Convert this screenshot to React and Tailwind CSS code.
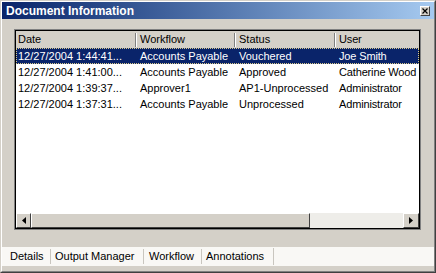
export default function App() {
  const cols = [
    { w: "w-[121px]", pl: "pl-[2px]" },
    { w: "w-[99px]", pl: "pl-[3px]" },
    { w: "w-[100px]", pl: "pl-[3px]" },
    { w: "flex-1", pl: "pl-[3px] tracking-[-0.15px]" },
  ];
  const headers = ["Date", "Workflow", "Status", "User"];
  const rows = [
    ["12/27/2004 1:44:41...", "Accounts Payable", "Vouchered", "Joe Smith"],
    ["12/27/2004 1:41:00...", "Accounts Payable", "Approved", "Catherine Wood"],
    ["12/27/2004 1:39:37...", "Approver1", "AP1-Unprocessed", "Administrator"],
    ["12/27/2004 1:37:31...", "Accounts Payable", "Unprocessed", "Administrator"],
  ];
  const raised =
    "border border-t-white border-l-white border-r-[#404040] border-b-[#404040] bg-[#d4d0c8]";
  return (
    <div className="w-[436px] h-[273px] bg-[#d4d0c8] border border-t-[#d4d0c8] border-l-[#d4d0c8] border-r-[#404040] border-b-[#404040] font-['Liberation_Sans',Arial,sans-serif] text-[11px] leading-none text-black">
      <div className="h-full flex flex-col border border-t-white border-l-white border-r-[#808080] border-b-[#808080]">
        {/* Title bar */}
        <div className="h-[17px] shrink-0 flex items-center justify-between bg-linear-to-r from-[#0a246a] to-[#a6caf0] pl-[4px] pr-[4px]">
          <span className="text-white font-bold text-[12px]">Document Information</span>
          <div className={`w-[10px] h-[10px] flex items-center justify-center ${raised}`}>
            <svg width="6" height="6" viewBox="0 0 6 6">
              <path d="M0.5 0.5 L5.5 5.5 M5.5 0.5 L0.5 5.5" stroke="#000" strokeWidth="1.2" />
            </svg>
          </div>
        </div>

        {/* List */}
        <div className="ml-[12px] mt-[10px] w-[407px] h-[201px] shrink-0 border border-[#808080]">
          <div className="h-full flex flex-col border border-black bg-white">
            <div className="h-[17px] shrink-0 flex bg-[#d4d0c8]">
              {headers.map((h, i) => (
                <div key={h} className={`${cols[i].w} flex items-center justify-between`}>
                  <span className={cols[i].pl}>{h}</span>
                  {i < 3 && (
                    <div className="flex h-[14px]">
                      <div className="w-px bg-[#808080]" />
                      <div className="w-px bg-white" />
                    </div>
                  )}
                </div>
              ))}
            </div>
            {rows.map((r, ri) => (
              <div
                key={ri}
                className={`h-[16px] shrink-0 flex items-center ${
                  ri === 0
                    ? "bg-[#0a246a] text-white outline-1 outline-dotted outline-[#d8c88a] -outline-offset-1"
                    : ""
                }`}
              >
                {r.map((c, ci) => (
                  <div
                    key={ci}
                    className={`${cols[ci].w} ${cols[ci].pl} whitespace-nowrap ${ci < 3 ? "overflow-hidden" : ""}`}
                  >
                    {c}
                  </div>
                ))}
              </div>
            ))}
            <div className="flex-1" />
            {/* Horizontal scrollbar */}
            <div className="h-[15px] shrink-0 flex bg-[#eeede9]">
              <div className={`w-[15px] h-full flex items-center justify-center ${raised}`}>
                <svg width="4" height="7" viewBox="0 0 4 7">
                  <path d="M4 0 L0 3.5 L4 7 Z" fill="#000" />
                </svg>
              </div>
              <div className={`w-[279px] h-full ${raised}`} />
              <div className="flex-1" />
              <div className={`w-[16px] h-full flex items-center justify-center ${raised}`}>
                <svg width="4" height="7" viewBox="0 0 4 7">
                  <path d="M0 0 L4 3.5 L0 7 Z" fill="#000" />
                </svg>
              </div>
            </div>
          </div>
        </div>

        {/* Tabs */}
        <div className="mt-[17px] h-[19px] shrink-0 flex bg-[#f9f8f5]">
          <div className="w-[48px] pl-[8px] flex items-center">Details</div>
          <div className="w-px my-[2px] bg-[#c9c6bf]" />
          <div className="w-[92px] pl-[4px] flex items-center">Output Manager</div>
          <div className="w-px my-[2px] bg-[#c9c6bf]" />
          <div className="w-[57px] pl-[5px] flex items-center">Workflow</div>
          <div className="w-px my-[2px] bg-[#c9c6bf]" />
          <div className="w-[71px] pl-[4px] flex items-center">Annotations</div>
          <div className="w-px my-[1px] bg-[#c9c6bf]" />
        </div>
      </div>
    </div>
  );
}
